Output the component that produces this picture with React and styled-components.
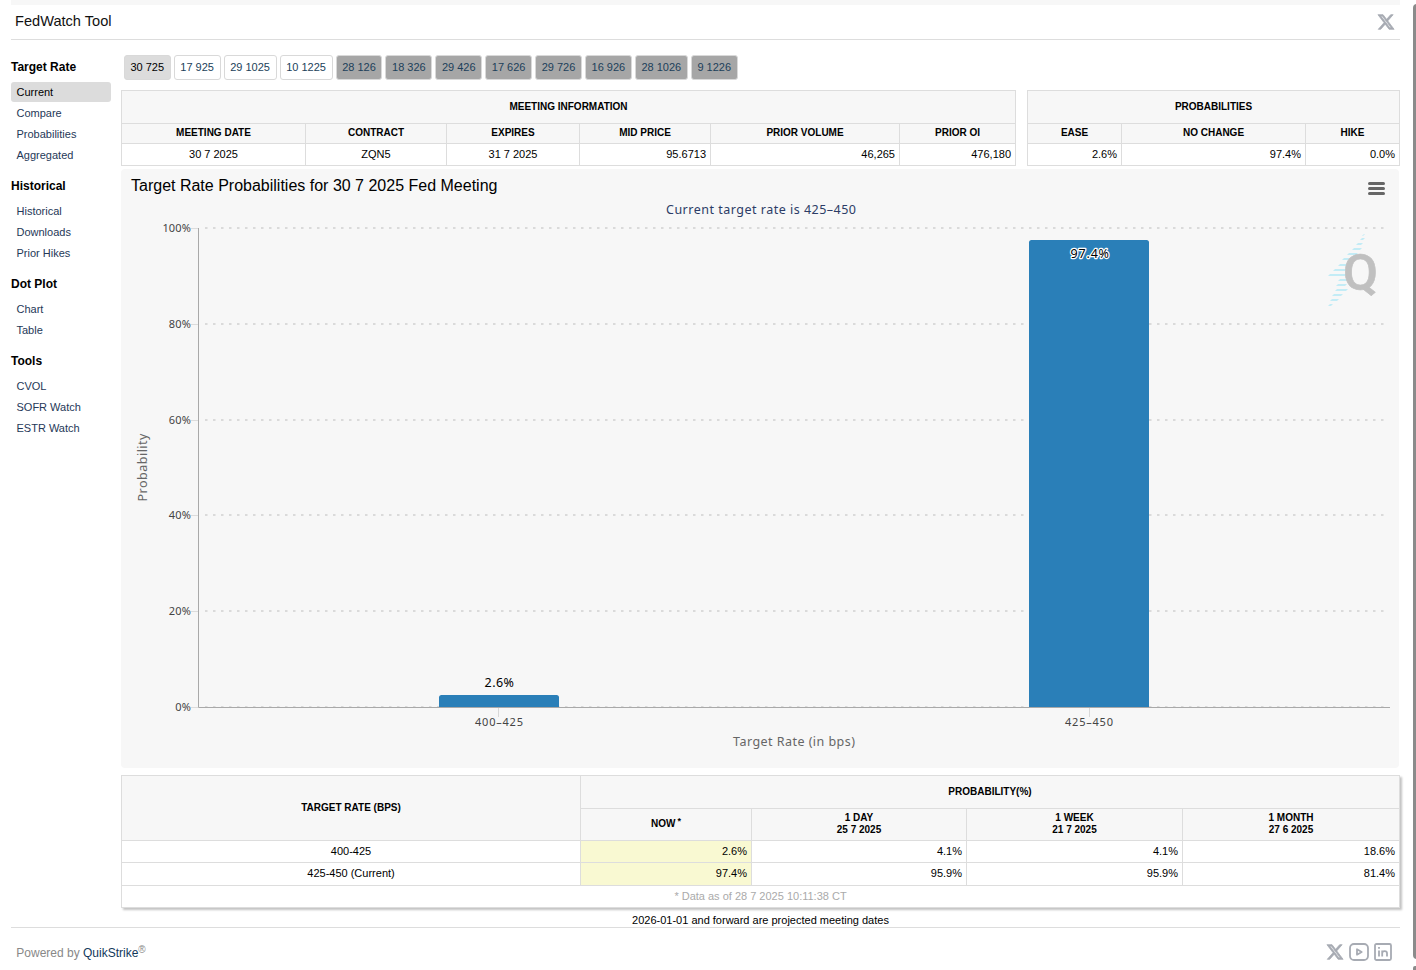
import React from 'react';
import styled, { createGlobalStyle } from 'styled-components';
import { FaXTwitter } from 'react-icons/fa6';

const GlobalStyle = createGlobalStyle`
    body{
        margin:0;
        background:#fff;
        font-family:"Liberation Sans", Arial, sans-serif;
        font-size:11px;
        color:#000;
        overflow:hidden;
    }
`;

const Page = styled.div`
    display:flex;
    justify-content:space-between;
    height:970px;
`;

const Content = styled.div`
    width:1389px;
    margin-left:11px;
`;

const TopStrip = styled.div`
    height:5px;
    background:#f7f7f7;
`;

const Header = styled.header`
    display:flex;
    align-items:center;
    justify-content:space-between;
    box-sizing:border-box;
    height:35px;
    padding:0 5px 0 4px;
    border-bottom:1px solid #ddd;
    color:#a7abb3;
`;

const Title = styled.h1`
    margin:0;
    padding-bottom:3px;
    font-size:14.6px;
    font-weight:normal;
    line-height:18px;
    color:#111;
`;

const XIcon = styled(FaXTwitter)`
    stroke:currentColor;
    stroke-width:22px;
`;

const Body = styled.div`
    display:flex;
    height:887px;
`;

const Sidebar = styled.nav`
    width:100px;
    padding-top:17px;
    margin-right:10px;
`;

const NavGroup = styled.div`
    margin-bottom:11.4px;
`;

const NavTitle = styled.h2`
    margin:0;
    height:25px;
    line-height:20px;
    font-size:12px;
`;

const NavItem = styled.a`
    display:block;
    height:20px;
    margin-bottom:.85px;
    padding-left:5.5px;
    line-height:20px;
    border-radius:3px;
    color:${props => props.$active ? '#000' : '#253858'};
    background:${props => props.$active ? '#dcdcdc' : 'transparent'};
`;

const Main = styled.main`
    width:1279px;
`;

const Tabs = styled.div`
    display:flex;
    gap:2.94px;
    padding:15px 0 10px 2.8px;
`;

const Tab = styled.a`
    box-sizing:border-box;
    height:25px;
    padding:0 5.65px;
    border:1px solid #d9d9d9;
    border-radius:3px;
    line-height:23px;
    white-space:nowrap;
    color:${props => props.$kind === 'active' ? '#000' : '#1c3f5a'};
    background:${props => ({ active: '#dcdcdc', open: '#fff', projected: '#a6a6a6' })[props.$kind]};
`;

const InfoRow = styled.div`
    display:flex;
    justify-content:space-between;
    margin-bottom:3px;
`;

const Grid = styled.div`
    display:grid;
    grid-template-columns:${props => props.$columns};
    grid-template-rows:${props => props.$rows};
    gap:1px;
    width:max-content;
    border:1px solid #ddd;
    background:#ddd;
    box-shadow:${props => props.$shadow ? '2px 2px 2px #c4c4c4' : 'none'};
`;

const HeadCell = styled.div`
    display:flex;
    align-items:center;
    justify-content:center;
    grid-column:span ${props => props.$span || 1};
    grid-row:span ${props => props.$rowSpan || 1};
    padding-bottom:1px;
    background:#f7f7f7;
    font-size:10px;
    font-weight:bold;
    line-height:12px;
    text-align:center;
    white-space:pre-line;

    sup{
        font-size:9px;
        line-height:0;
        margin:-7px 0 0 2px;
    }
`;

const Cell = styled.div`
    display:flex;
    align-items:center;
    justify-content:${props => props.$align === 'right' ? 'flex-end' : 'center'};
    padding:0 4px 1px;
    line-height:13px;
    background:${props => props.$now ? '#f9f9d2' : '#fff'};
`;

const NoteCell = styled(Cell)`
    grid-column:1 / -1;
    color:#aaa;
`;

const ChartPanel = styled.section`
    width:1278px;
    height:599px;
    margin-bottom:7px;
    border-radius:4px;
    background:#f7f7f7;
`;

const ChartHeader = styled.div`
    display:flex;
    justify-content:space-between;
    height:30px;
    padding:0 14px 0 10px;
`;

const ChartTitle = styled.h3`
    margin:0;
    font-size:16px;
    font-weight:normal;
    line-height:33px;
`;

const MenuButton = styled.div`
    display:flex;
    flex-direction:column;
    gap:2px;
    padding-top:13px;

    span{
        width:17px;
        height:3px;
        border-radius:1.5px;
        background:#666;
    }
`;

const Svg = styled.svg`
    display:block;
    font-family:"Noto Sans", "Open Sans", sans-serif;
`;

const Projected = styled.p`
    margin:0;
    padding-top:6px;
    line-height:13px;
    text-align:center;
`;

const Footer = styled.footer`
    display:flex;
    align-items:center;
    justify-content:space-between;
    height:42px;
    padding:8px 8px 0 5.3px;
    box-sizing:border-box;
    border-top:1px solid #ddd;
    font-size:12px;
    color:#888;

    a{
        color:#12395b;
    }
    sup{
        position:relative;
        top:1px;
        font-size:10px;
        line-height:0;
    }
`;

const Social = styled.div`
    display:flex;
    align-items:center;
    gap:5px;
    padding-bottom:1px;
    color:#a7abb3;
`;

const Scrollbar = styled.div`
    width:3px;
    overflow:hidden;
    padding-top:4px;
`;

const Thumb = styled.div`
    width:8px;
    height:955px;
    border-radius:4px;
    background:#8b8b8b;
`;

const ScrollArrow = styled.div`
    width:8px;
    height:4px;
    margin-top:7px;
    border-radius:2px 0 0 0;
    background:#8b8b8b;
`;

const NAV = [
    { title: 'Target Rate', items: ['Current', 'Compare', 'Probabilities', 'Aggregated'] },
    { title: 'Historical', items: ['Historical', 'Downloads', 'Prior Hikes'] },
    { title: 'Dot Plot', items: ['Chart', 'Table'] },
    { title: 'Tools', items: ['CVOL', 'SOFR Watch', 'ESTR Watch'] },
];

const MEETINGS = ['30 725', '17 925', '29 1025', '10 1225', '28 126', '18 326', '29 426', '17 626', '29 726', '16 926', '28 1026', '9 1226'];

const INFO = [
    ['MEETING DATE', '30 7 2025'],
    ['CONTRACT', 'ZQN5'],
    ['EXPIRES', '31 7 2025'],
    ['MID PRICE', '95.6713', 'right'],
    ['PRIOR VOLUME', '46,265', 'right'],
    ['PRIOR OI', '476,180', 'right'],
];

const PROBS = [
    ['EASE', '2.6%', 'right'],
    ['NO CHANGE', '97.4%', 'right'],
    ['HIKE', '0.0%', 'right'],
];

const HISTORY = [
    ['400-425', '2.6%', '4.1%', '4.1%', '18.6%'],
    ['425-450 (Current)', '97.4%', '95.9%', '95.9%', '81.4%'],
];

// plot area inside the chart svg
const LEFT = 78;
const RIGHT = 1269;
const BASE = 508;
const PLOT_HEIGHT = 479;

const tabKind = (i) => {
    if(i === 0) return 'active';
    return i < 4 ? 'open' : 'projected';
}

const InfoTable = ({ title, data, columns }) => (
    <Grid $columns={columns} $rows="32px 19px 21px">
        <HeadCell $span={data.length}>{title}</HeadCell>
        {data.map(([name]) => <HeadCell key={name}>{name}</HeadCell>)}
        {data.map(([name, value, align]) => <Cell key={name} $align={align}>{value}</Cell>)}
    </Grid>
);

const STRIPES = [
    [1362, 234, 1], [1360, 238, 3], [1356, 243, 5], [1352, 248, 8],
    [1347, 253, 9], [1342, 258, 6], [1338, 264, 8], [1333, 269, 12],
    [1328, 274, 17], [1338, 279, 8], [1336, 284, 9], [1335, 289, 11],
    [1332, 294, 9], [1330, 299, 7], [1328, 304, 3],
];

const Watermark = () => (
    <g transform="translate(-121 -199)">
        {STRIPES.map(([x, y, w]) => (
            <path key={y} d={`M${x} ${y + 2}l2 -2h${w}l-2 2z`} fill="#c3ecf6" />
        ))}
        <text x="1343" y="290" fontFamily="Roboto, sans-serif" fontWeight="500" fontSize="50" textLength="35" lengthAdjust="spacingAndGlyphs" fill="#c0c0c0" stroke="#c0c0c0" strokeWidth=".6">Q</text>
    </g>
);

const Chart = () => (
    <Svg width="1278" height="569">
        {[0, 20, 40, 60, 80, 100].map(v => {
            const y = Math.round(BASE - PLOT_HEIGHT * v / 100);
            return (
                <g key={v}>
                    <line x1={LEFT + 6} x2={RIGHT - 2} y1={y} y2={y} stroke="#dadada" strokeWidth="2" strokeDasharray="2.5 5.5" />
                    <line x1={LEFT - 8} x2={LEFT - 1} y1={y + .5} y2={y + .5} stroke="#dcdcdc" />
                    <text x="70" y={y + 4} textAnchor="end" fontSize="11" letterSpacing=".15" fill="#444">{v}%</text>
                </g>
            );
        })}
        <Watermark />
        <path d="M318 508.5v-10q0 -2.5 2.5 -2.5h115q2.5 0 2.5 2.5v10z" fill="#2a7fb8" />
        <path d="M908 508.5V43.5q0 -2.5 2.5 -2.5h115q2.5 0 2.5 2.5V508.5z" fill="#2a7fb8" />
        <path d="M77.5 29V508.5H1269" fill="none" stroke="#a9a9a9" />
        <path d="M377.5 509v9M968.5 509v9" stroke="#d8d8d8" />
        <text x="545" y="15" fontSize="12.5" textLength="190" fill="#2c3c66">Current target rate is 425–450</text>
        <text x="363.5" y="488" fontSize="12.5" textLength="29.5" fill="#000">2.6%</text>
        <text x="949.5" y="59" fontSize="12.5" textLength="38.5" fill="#000" stroke="#fff" strokeWidth="2.5" strokeLinejoin="round" paintOrder="stroke">97.4%</text>
        <text x="354" y="527" fontSize="11" textLength="48" fill="#444">400–425</text>
        <text x="944" y="527" fontSize="11" textLength="48" fill="#444">425–450</text>
        <text x="612" y="547" fontSize="12.5" textLength="122" fill="#666">Target Rate (in bps)</text>
        <text transform="translate(26 302.5) rotate(-90)" fontSize="12.5" textLength="68" fill="#666">Probability</text>
    </Svg>
);

const YoutubeIcon = () => (
    <svg width="20" height="18" viewBox="0 0 20 18" fill="none" stroke="currentColor" strokeWidth="1.8" strokeLinejoin="round">
        <rect x="1" y="1" width="18" height="16" rx="4" />
        <path d="M8 6.3v5.4l4.7 -2.7z" />
    </svg>
);

const LinkedinIcon = () => (
    <svg width="18" height="18" viewBox="0 0 18 18" fill="none" stroke="currentColor" strokeWidth="1.8">
        <rect x="1" y="1" width="16" height="16" rx="1.5" />
        <path d="M5 7.5v6M5 4v1.8M8.2 13.5v-6M8.2 10.3c0 -3 4.8 -3 4.8 0v3.2" />
    </svg>
);

const App = () => (
    <>
        <GlobalStyle />
        <Page>
            <Content>
                <TopStrip />
                <Header>
                    <Title>FedWatch Tool</Title>
                    <XIcon size={18} />
                </Header>
                <Body>
                    <Sidebar>
                        {NAV.map(group => (
                            <NavGroup key={group.title}>
                                <NavTitle>{group.title}</NavTitle>
                                {group.items.map(item => <NavItem key={item} $active={item === 'Current'}>{item}</NavItem>)}
                            </NavGroup>
                        ))}
                    </Sidebar>
                    <Main>
                        <Tabs>
                            {MEETINGS.map((date, i) => <Tab key={date} $kind={tabKind(i)}>{date}</Tab>)}
                        </Tabs>
                        <InfoRow>
                            <InfoTable title="MEETING INFORMATION" data={INFO} columns="183px 140px 132px 130px 188px 115px" />
                            <InfoTable title="PROBABILITIES" data={PROBS} columns="93px 183px 93px" />
                        </InfoRow>
                        <ChartPanel>
                            <ChartHeader>
                                <ChartTitle>Target Rate Probabilities for 30 7 2025 Fed Meeting</ChartTitle>
                                <MenuButton><span /><span /><span /></MenuButton>
                            </ChartHeader>
                            <Chart />
                        </ChartPanel>
                        <Grid $columns="458px 170px 214px 215px 216px" $rows="32px 31px 21px 22px 21px" $shadow>
                            <HeadCell $rowSpan={2}>TARGET RATE (BPS)</HeadCell>
                            <HeadCell $span={4}>PROBABILITY(%)</HeadCell>
                            <HeadCell>NOW<sup>*</sup></HeadCell>
                            <HeadCell>{'1 DAY\n25 7 2025'}</HeadCell>
                            <HeadCell>{'1 WEEK\n21 7 2025'}</HeadCell>
                            <HeadCell>{'1 MONTH\n27 6 2025'}</HeadCell>
                            {HISTORY.map(row => row.map((value, i) => (
                                <Cell key={row[0] + i} $align={i > 0 ? 'right' : 'center'} $now={i === 1}>{value}</Cell>
                            )))}
                            <NoteCell>* Data as of 28 7 2025 10:11:38 CT</NoteCell>
                        </Grid>
                        <Projected>2026-01-01 and forward are projected meeting dates</Projected>
                    </Main>
                </Body>
                <Footer>
                    <div>Powered by <a>QuikStrike</a><sup>®</sup></div>
                    <Social>
                        <XIcon size={18} />
                        <YoutubeIcon />
                        <LinkedinIcon />
                    </Social>
                </Footer>
            </Content>
            <Scrollbar>
                <Thumb />
                <ScrollArrow />
            </Scrollbar>
        </Page>
    </>
);

export default App;
